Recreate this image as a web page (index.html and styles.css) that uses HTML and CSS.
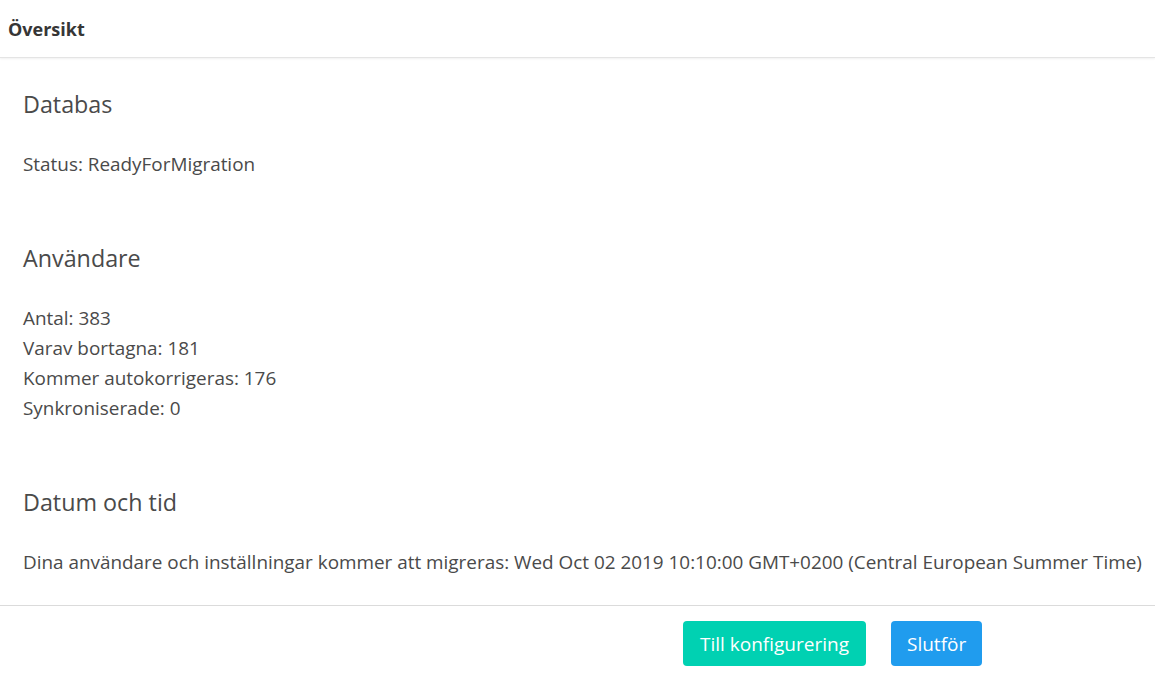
FILE: index.html
```html
<!DOCTYPE html>
<html lang="sv">
<head>
<meta charset="utf-8">
<title>Översikt</title>
<link rel="stylesheet" href="styles.css">
</head>
<body>
<div class="page">
  <header class="topbar">
    <h1 class="topbar-title">Översikt</h1>
  </header>
  <main class="content">
    <section class="block">
      <h2 class="block-title">Databas</h2>
      <p class="line">Status: ReadyForMigration</p>
    </section>
    <section class="block">
      <h2 class="block-title">Användare</h2>
      <p class="line">Antal: 383</p>
      <p class="line">Varav bortagna: 181</p>
      <p class="line">Kommer autokorrigeras: 176</p>
      <p class="line">Synkroniserade: 0</p>
    </section>
    <section class="block">
      <h2 class="block-title">Datum och tid</h2>
      <p class="line">Dina användare och inställningar kommer att migreras: Wed Oct 02 2019 10:10:00 GMT+0200 (Central European Summer Time)</p>
    </section>
  </main>
  <footer class="actions">
    <button class="btn btn-primary">Till konfigurering</button>
    <button class="btn btn-info">Slutför</button>
  </footer>
</div>
</body>
</html>
```

FILE: styles.css
```css
html, body {
  margin: 0;
  padding: 0;
  background: #fff;
}
body {
  font-family: "Open Sans", "Noto Sans", sans-serif;
  color: #4a4a4a;
}
.page {
  width: 1155px;
}
.topbar {
  height: 57px;
  display: flex;
  align-items: center;
  padding-left: 8px;
  border-bottom: 1px solid #e4e4e4;
  box-shadow: 0 1px 2px rgba(0,0,0,0.06);
}
.topbar-title {
  margin: 0;
  font-size: 18px;
  font-weight: 700;
  color: #363636;
}
.content {
  padding: 31px 23px 0;
}
.block {
  padding-bottom: 64px;
}
.block:last-child {
  padding-bottom: 28px;
}
.block-title {
  margin: 0 0 30px;
  font-size: 23.3px;
  font-weight: 400;
  line-height: 30px;
  color: #4a4a4a;
}
.line {
  margin: 0;
  font-size: 18.9px;
  line-height: 30px;
  white-space: nowrap;
}
.actions {
  border-top: 1px solid #dbdbdb;
  display: flex;
  justify-content: flex-end;
  gap: 25px;
  padding: 15px 173px 0 0;
}
.btn {
  height: 45px;
  border: none;
  border-radius: 4px;
  font-family: inherit;
  font-size: 19px;
  color: #fff;
  padding: 0 16px;
  cursor: pointer;
}
.btn-primary {
  background: #00d1b2;
  width: 183px;
}
.btn-info {
  background: #209cee;
  width: 91px;
}
```
